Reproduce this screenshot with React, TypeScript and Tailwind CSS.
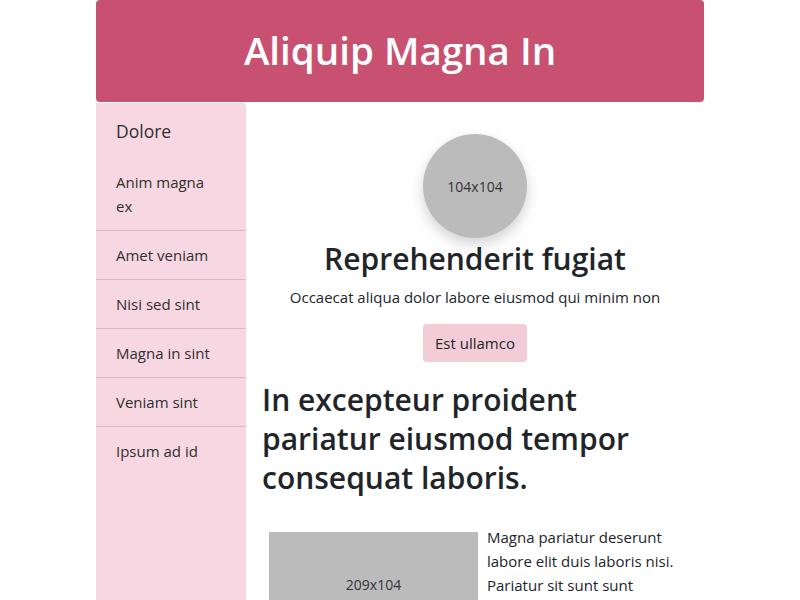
import React from "react";

const font = { fontFamily: '"Open Sans", "Noto Sans", sans-serif' };

export default function App() {
  const items = ["Anim magna ex", "Amet veniam", "Nisi sed sint", "Magna in sint", "Veniam sint", "Ipsum ad id"];
  return (
    <div className="w-[608px] mx-auto text-[#212529] font-['Open_Sans',_'Noto_Sans',_sans-serif]" style={font}>
      <header className="h-[102px] bg-[#c85172] rounded-[4px] flex items-center justify-center">
        <h1 className="text-white text-[38.5px] font-semibold leading-[48px] -mt-[2px]">Aliquip Magna In</h1>
      </header>
      <div className="flex">
        <aside className="w-[150px] shrink-0 bg-[#f7d7e1] rounded-tr-[4px] min-h-[520px] mt-[1px]">
          <div className="pl-[20px] pr-[16px] pt-[14px] pb-[13px] text-[17.5px] leading-[28px] text-[#2f2f2f]">Dolore</div>
          {items.map((t, i) => (
            <div
              key={t}
              className={
                "pl-[20px] pr-[28px] py-[12px] text-[15px] leading-[24px] text-[#2f2f2f] " +
                (i < items.length - 1 ? "border-b border-[#dbb7c3]" : "")
              }
            >
              {t}
            </div>
          ))}
        </aside>
        <main className="flex-1 px-[16px] pt-[32px]">
          <div className="flex flex-col items-center">
            <div className="w-[104px] h-[104px] rounded-full bg-[#bbbbbb] shadow-[0_6px_14px_rgba(0,0,0,0.18)] flex items-center justify-center text-[14px] text-[#333]">
              104x104
            </div>
            <h2 className="mt-[2px] text-[30px] font-semibold leading-[38px]">Reprehenderit fugiat</h2>
            <p className="mt-[7px] text-[15px] leading-[24px]">Occaecat aliqua dolor labore eiusmod qui minim non</p>
            <button className="mt-[15px] h-[38px] px-[12.5px] bg-[#f2cdd8] rounded-[4px] text-[15px] leading-[24px] text-[#212529]">
              Est ullamco
            </button>
          </div>
          <h2 className="mt-[18px] text-[30px] font-semibold leading-[39px]">
            In excepteur proident pariatur eiusmod tempor consequat laboris.
          </h2>
          <div className="mt-[35px] flex items-start pl-[7px] gap-[9px]">
            <div className="w-[209px] h-[104px] shrink-0 bg-[#bbbbbb] flex items-center justify-center text-[14px] text-[#333]">
              209x104
            </div>
            <p className="text-[15px] leading-[24px] -mt-[7px]">
              Magna pariatur deserunt labore elit duis laboris nisi. Pariatur sit sunt sunt exercitation.
            </p>
          </div>
        </main>
      </div>
    </div>
  );
}
